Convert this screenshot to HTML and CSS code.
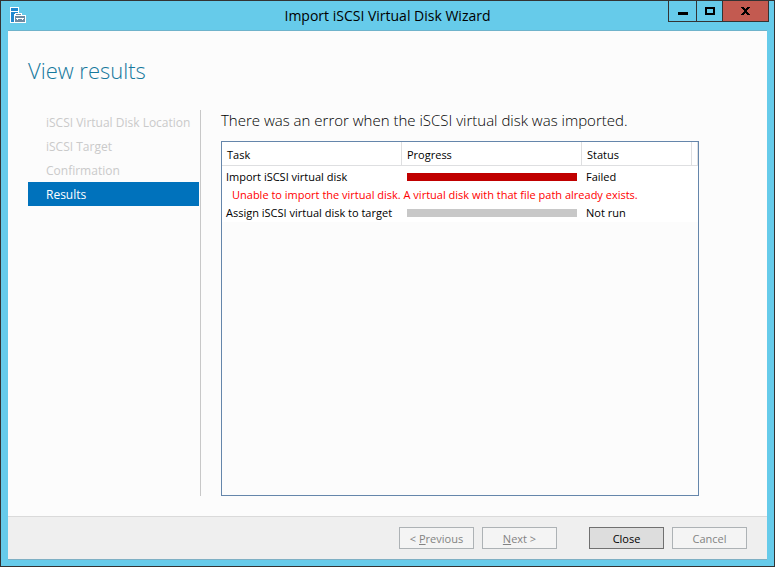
FILE: index.html
```html
<!DOCTYPE html>
<html lang="en">
<head>
  <meta charset="UTF-8">
  <meta name="viewport" content="width=device-width, initial-scale=1.0">
  <title>Import iSCSI Virtual Disk Wizard</title>
  <link rel="stylesheet" href="styles.css">
</head>
<body>
  <div class="window">
    <header class="titlebar">
      <svg class="app-icon" width="16" height="16" viewBox="0 0 16 16" shape-rendering="crispEdges" aria-hidden="true">
        <path fill="#fff" d="M0 0h9v7h-4v9h-5z"/>
        <path fill="#1e87cf" d="M1 1h7v3h-7zM1 5h7v2h-4v8h-3z"/>
        <path fill="#fff" d="M5 6h7v2h4v8h-12v-8h1z"/>
        <path fill="#6d8ba3" d="M6 7h5v1h-5zM5 9h10v6h-10z"/>
        <path fill="#fff" d="M7 8h3v1h-3zM6 11h8v1h-8z"/>
        <path fill="#fff" d="M7 12h1v1h-1zM12 12h1v1h-1z"/>
      </svg>
      <div class="title">Import iSCSI Virtual Disk Wizard</div>
      <div class="window-controls">
        <button class="control" type="button" aria-label="Minimize">
          <svg width="10" height="10" viewBox="0 0 10 10" shape-rendering="crispEdges"><path d="M0 6h10v3h-10z"/></svg>
        </button>
        <button class="control control-max" type="button" aria-label="Maximize">
          <svg width="10" height="10" viewBox="0 0 10 10" shape-rendering="crispEdges"><path fill-rule="evenodd" d="M0 1h10v8h-10zM2 3v4h6v-4z"/></svg>
        </button>
        <button class="control control-close" type="button" aria-label="Close window">
          <svg width="9" height="10" viewBox="0 0 9 10" shape-rendering="crispEdges"><path d="M0 1h3v1h1v1h1v-1h1v-1h3v1h-1v1h-1v1h-1v2h1v1h1v1h1v1h-3v-1h-1v-1h-1v1h-1v1h-3v-1h1v-1h1v-1h1v-2h-1v-1h-1v-1h-1z"/></svg>
        </button>
      </div>
    </header>

    <div class="client">
      <main class="page">
        <h1>View results</h1>
        <div class="columns">
          <nav class="steps">
            <ol>
              <li>iSCSI Virtual Disk Location</li>
              <li>iSCSI Target</li>
              <li>Confirmation</li>
              <li class="current" aria-current="step">Results</li>
            </ol>
          </nav>
          <section class="results">
            <p class="message">There was an error when the iSCSI virtual disk was imported.</p>
            <div class="list">
              <table>
                <colgroup>
                  <col class="col-task">
                  <col class="col-progress">
                  <col class="col-status">
                  <col>
                </colgroup>
                <thead>
                  <tr><th>Task</th><th>Progress</th><th>Status</th><th></th></tr>
                </thead>
                <tbody>
                  <tr>
                    <td>Import iSCSI virtual disk</td>
                    <td><div class="bar bar-failed"></div></td>
                    <td>Failed</td>
                    <td></td>
                  </tr>
                  <tr>
                    <td class="error" colspan="4">Unable to import the virtual disk. A virtual disk with that file path already exists.</td>
                  </tr>
                  <tr>
                    <td>Assign iSCSI virtual disk to target</td>
                    <td><div class="bar"></div></td>
                    <td>Not run</td>
                    <td></td>
                  </tr>
                </tbody>
              </table>
            </div>
          </section>
        </div>
      </main>

      <footer class="actions">
        <button class="btn" type="button" disabled>&lt; <u>P</u>revious</button>
        <button class="btn" type="button" disabled><u>N</u>ext &gt;</button>
        <button class="btn btn-default" type="button">Close</button>
        <button class="btn" type="button" disabled>Cancel</button>
      </footer>
    </div>
  </div>
</body>
</html>
```

FILE: styles.css
```css
* {
  box-sizing: border-box;
}
body {
  margin: 0;
  font-family: "Open Sans", "Noto Sans", sans-serif;
  font-size: 11px;
  color: #000;
}
.window {
  display: flex;
  flex-direction: column;
  height: 100vh;
  padding: 0 7px 6px;
  background: #66cbea;
  border: 1px solid #333;
}

/* title bar */
.titlebar {
  display: grid;
  grid-template-columns: 1fr auto 1fr;
  align-items: start;
  height: 29px;
}
.app-icon {
  margin: 6px 0 0 2px;
}
.title {
  font-size: 14px;
  line-height: 29px;
}
.window-controls {
  display: flex;
  justify-content: flex-end;
  margin: -1px -2px 0 0;
}
.control {
  display: flex;
  align-items: center;
  justify-content: center;
  width: 29px;
  height: 22px;
  margin-left: -1px;
  padding: 0;
  background: transparent;
  border: 1px solid #333;
}
.control-max {
  width: 27px;
}
.control-close {
  width: 47px;
  background: #c35a50;
}

/* client area */
.client {
  flex: 1;
  display: flex;
  flex-direction: column;
  background: #fcfcfc;
  border-top: 1px solid #6fb3cb;
  border-bottom: 1px solid #7fb0c4;
}
.page {
  flex: 1;
  display: flex;
  flex-direction: column;
  padding: 24px 68px 20px 20px;
}
h1 {
  margin: 0 0 25px;
  font-size: 22px;
  font-weight: 300;
  line-height: 30px;
  color: #16789c;
}
.columns {
  flex: 1;
  display: flex;
  gap: 20px;
}
.steps {
  width: 173px;
  padding-right: 1px;
  border-right: 1px solid #c8c8c8;
}
.steps ol {
  margin: 0;
  padding: 0;
  list-style: none;
}
.steps li {
  padding: 2px 0 0 18px;
  font-size: 12px;
  line-height: 22px;
  white-space: nowrap;
  color: #cacaca;
}
.steps .current {
  background: #0072bc;
  color: #fff;
}
.results {
  flex: 1;
  display: flex;
  flex-direction: column;
  min-width: 0;
}
.message {
  margin: 0 0 11px;
  font-size: 15px;
  font-weight: 300;
  line-height: 20px;
}

/* task list */
.list {
  flex: 1;
  border: 1px solid #6586ab;
}
table {
  width: 100%;
  table-layout: fixed;
  border-collapse: separate;
  border-spacing: 0;
  background: #fff;
}
.col-task,
.col-progress {
  width: 180px;
}
.col-status {
  width: 110px;
}
th {
  height: 24px;
  padding: 2px 5px 0;
  font-weight: 400;
  text-align: left;
  border-right: 1px solid #dedfe1;
  border-bottom: 1px solid #dedfe1;
}
td {
  height: 18px;
  padding: 0 4px;
  line-height: 18px;
  white-space: nowrap;
  overflow: hidden;
}
tbody::before {
  content: "";
  display: block;
  height: 2px;
}
td:nth-child(2) {
  padding: 0 5px;
}
td.error {
  padding-left: 10px;
  color: #f00;
}
.bar {
  height: 8px;
  background: #c8c8c8;
}
.bar-failed {
  background: #c00000;
}

/* buttons */
.actions {
  display: flex;
  justify-content: flex-end;
  gap: 8px;
  padding: 10px 20px;
  background: #efefef;
  border-top: 1px solid #dadada;
}
.btn {
  width: 75px;
  height: 22px;
  padding: 0;
  font: inherit;
  background: #f4f4f4;
  border: 1px solid #adb2b5;
  color: #838383;
}
.btn-default {
  margin-left: 24px;
  background: #dddddd;
  border-color: #707070;
  color: #000;
}
```
